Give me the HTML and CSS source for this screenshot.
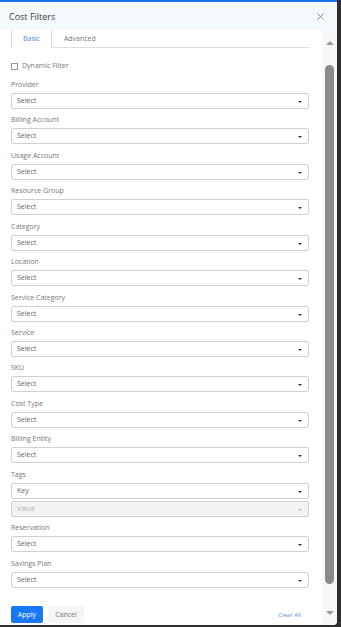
FILE: index.html
```html
<!DOCTYPE html>
<html>
<head>
    <title>Cost Filters</title>
    <link rel="stylesheet" href="styles.css">
</head>
<body>
    <div class="panel">
        <div class="header">
            <span class="title">Cost Filters</span>
            <svg class="close" width="7" height="7" viewBox="0 0 7 7">
                <path d="M0.5 0.5 L6.5 6.5 M6.5 0.5 L0.5 6.5" stroke="#6d7fa6" stroke-width="0.9" fill="none"/>
            </svg>
        </div>

        <div class="body">
            <div class="content">
                <div class="tabs">
                    <div class="tab active">Basic</div>
                    <div class="tab">Advanced</div>
                </div>

                <div class="filters">
                    <div class="dynamic">
                        <span class="checkbox"></span>
                        <span>Dynamic Filter</span>
                    </div>

                    <div class="field">
                        <label>Provider</label>
                        <div class="select">Select</div>
                    </div>
                    <div class="field">
                        <label>Billing Account</label>
                        <div class="select">Select</div>
                    </div>
                    <div class="field">
                        <label>Usage Account</label>
                        <div class="select">Select</div>
                    </div>
                    <div class="field">
                        <label>Resource Group</label>
                        <div class="select">Select</div>
                    </div>
                    <div class="field">
                        <label>Category</label>
                        <div class="select">Select</div>
                    </div>
                    <div class="field">
                        <label>Location</label>
                        <div class="select">Select</div>
                    </div>
                    <div class="field">
                        <label>Service Category</label>
                        <div class="select">Select</div>
                    </div>
                    <div class="field">
                        <label>Service</label>
                        <div class="select">Select</div>
                    </div>
                    <div class="field">
                        <label>SKU</label>
                        <div class="select">Select</div>
                    </div>
                    <div class="field">
                        <label>Cost Type</label>
                        <div class="select">Select</div>
                    </div>
                    <div class="field">
                        <label>Billing Entity</label>
                        <div class="select">Select</div>
                    </div>
                    <div class="field">
                        <label>Tags</label>
                        <div class="select">Key</div>
                        <div class="select disabled">Value</div>
                    </div>
                    <div class="field">
                        <label>Reservation</label>
                        <div class="select">Select</div>
                    </div>
                    <div class="field">
                        <label>Savings Plan</label>
                        <div class="select">Select</div>
                    </div>
                </div>

                <div class="footer">
                    <button class="btn-apply">Apply</button>
                    <button class="btn-cancel">Cancel</button>
                    <a class="clear-all">Clear All</a>
                </div>
            </div>

            <div class="scrollbar">
                <span class="arrow-up"></span>
                <span class="thumb"></span>
                <span class="arrow-down"></span>
            </div>
        </div>
    </div>
</body>
</html>
```

FILE: styles.css
```css
body {
    margin: 0;
    background-color: #2e2e2e;
    font-family: "Open Sans", Arial, sans-serif;
}
.panel {
    width: 337px;
    height: 625px;
    background-color: white;
    border-top: 2px solid #1a73e8;
    border-bottom-right-radius: 4px;
    display: flex;
    flex-direction: column;
    overflow: hidden;
    box-sizing: border-box;
}
.header {
    height: 28px;
    flex-shrink: 0;
    background-color: #f6f9fe;
    display: flex;
    align-items: center;
    justify-content: space-between;
    padding: 0 13px 0 9px;
}
.title {
    font-size: 9px;
    color: #3a3a3a;
}
.body {
    flex: 1;
    display: flex;
    min-height: 0;
}
.content {
    flex: 1;
    display: flex;
    flex-direction: column;
    padding: 0 13px 2px 11px;
}
.tabs {
    display: flex;
    height: 17px;
    border-bottom: 1px solid #dedede;
    font-size: 7px;
}
.tab {
    padding: 0 12px;
    line-height: 17px;
    color: #777;
}
.tab.active {
    padding: 0 11px;
    color: #5585da;
    background-color: white;
    border-left: 1px solid #dedede;
    border-right: 1px solid #dedede;
    height: 18px;
}
.filters {
    padding-top: 12px;
    display: flex;
    flex-direction: column;
    gap: 6.45px;
}
.dynamic {
    display: flex;
    align-items: center;
    gap: 4px;
    height: 10px;
    font-size: 7px;
    color: #777;
    margin-bottom: 3.5px;
}
.checkbox {
    width: 5px;
    height: 5px;
    border: 1px solid #999;
    margin-top: 2px;
}
.field {
    display: flex;
    flex-direction: column;
}
.field label {
    font-size: 7px;
    line-height: 10px;
    color: #777;
    margin-bottom: 3px;
}
.select {
    height: 16px;
    box-sizing: border-box;
    border: 1px solid #d0d0d0;
    border-radius: 2px;
    padding: 0 5px;
    font-size: 7px;
    line-height: 13px;
    color: #666;
    position: relative;
}
.select::after {
    content: "";
    position: absolute;
    right: 6px;
    top: 7px;
    border-left: 2px solid transparent;
    border-right: 2px solid transparent;
    border-top: 2px solid #333;
}
.select + .select {
    margin-top: 2px;
}
.select.disabled {
    background-color: #f3f3f3;
    color: #b0b0b0;
}
.select.disabled::after {
    border-top-color: #bbb;
}
.footer {
    margin-top: auto;
    display: flex;
    align-items: center;
    gap: 5px;
}
.footer button {
    height: 17px;
    border: none;
    border-radius: 2px;
    font-family: "Open Sans", Arial, sans-serif;
    font-size: 7px;
    padding: 0;
    cursor: pointer;
}
.btn-apply {
    width: 32px;
    background-color: #1877f2;
    color: white;
}
.btn-cancel {
    width: 36px;
    background-color: #f4f5f7;
    color: #777;
}
.clear-all {
    margin-left: auto;
    margin-right: 8px;
    font-size: 6px;
    color: #5b8ee6;
}
.scrollbar {
    width: 15px;
    flex-shrink: 0;
    background-color: #f8f8f8;
    display: flex;
    flex-direction: column;
    align-items: center;
}
.arrow-up {
    margin-top: 11px;
    border-left: 4px solid transparent;
    border-right: 4px solid transparent;
    border-bottom: 4px solid #9a9a9a;
}
.thumb {
    margin-top: 20px;
    width: 9px;
    height: 519px;
    border-radius: 5px;
    background-color: #8a8a8a;
}
.arrow-down {
    margin-top: 27px;
    border-left: 4px solid transparent;
    border-right: 4px solid transparent;
    border-top: 4px solid #9a9a9a;
}
```
